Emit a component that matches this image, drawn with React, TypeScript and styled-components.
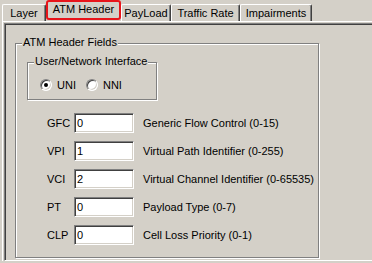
import React from "react";
import styled, { createGlobalStyle } from "styled-components";

const GlobalStyle = createGlobalStyle`
  html, body {
    margin: 0;
    padding: 0;
    background: #d4d0c8;
    overflow: hidden;
  }
  body {
    font-family: "Liberation Sans", Arial, sans-serif;
    font-size: 11px;
    color: #000;
  }
`;

const Window = styled.div`
  width: 372px;
  height: 263px;
  overflow: hidden;
  background: #d4d0c8;
`;

const TabStrip = styled.div`
  display: flex;
  align-items: flex-end;
  height: 21px;
  padding-left: 2px;
  box-sizing: border-box;
`;

const Tab = styled.div<{ $w: number }>`
  display: flex;
  justify-content: center;
  box-sizing: border-box;
  width: ${(p) => p.$w}px;
  height: 17px;
  padding-top: 2px;
  line-height: 13px;
  border-top: 1px solid #fff;
  border-left: 1px solid #fff;
  border-right: 1px solid #404040;
  box-shadow: inset -1px 0 0 #808080;
  border-radius: 2px 2px 0 0;
  white-space: nowrap;
`;

const ActiveTab = styled.div<{ $w: number }>`
  display: flex;
  justify-content: center;
  box-sizing: border-box;
  width: ${(p) => p.$w}px;
  height: 20px;
  margin-bottom: 1px;
  padding-top: 1px;
  line-height: 13px;
  border: 2px solid #e8141a;
  border-radius: 3px;
  white-space: nowrap;
`;

const Panel = styled.div`
  margin-left: 2px;
  border-top: 1px solid #fff;
  border-left: 1px solid #fff;
  padding: 1px 0 0 1px;
`;

const Sunken = styled.div`
  box-sizing: border-box;
  width: 420px;
  height: 238px;
  border-top: 1px solid #808080;
  border-left: 1px solid #808080;
  border-bottom: 1px solid #fff;
  box-shadow: inset 1px 1px 0 #404040;
  padding: 19px 0 0 10px;
`;

const Group = styled.div<{ $w: number; $h: number; $pt: number; $pl: number }>`
  position: relative;
  box-sizing: border-box;
  width: ${(p) => p.$w}px;
  height: ${(p) => p.$h}px;
  border: 1px solid #808080;
  box-shadow: inset 1px 1px 0 #fff, 1px 1px 0 #fff;
  padding: ${(p) => p.$pt}px 0 0 ${(p) => p.$pl}px;
`;

const GroupTitle = styled.span`
  position: absolute;
  top: -8px;
  left: 6px;
  padding: 0 1px;
  line-height: 13px;
  background: #d4d0c8;
  white-space: nowrap;
`;

const RadioRow = styled.div`
  display: flex;
  align-items: center;
  height: 16px;
  margin-top: 14px;
  gap: 10px;
`;

const RadioOption = styled.label`
  display: flex;
  align-items: center;
  gap: 5px;
  line-height: 13px;
`;

const RadioCircle = styled.span`
  display: flex;
  align-items: center;
  justify-content: center;
  box-sizing: border-box;
  width: 12px;
  height: 12px;
  border-radius: 50%;
  border: 1px solid;
  border-color: #808080 #fff #fff #808080;
  box-shadow: inset 1px 1px 0 #404040, inset -1px -1px 0 #d4d0c8;
  background: #fff;
`;

const RadioDot = styled.span`
  width: 4px;
  height: 4px;
  border-radius: 50%;
  background: #000;
`;

const Rows = styled.div`
  display: flex;
  flex-direction: column;
  gap: 8px;
  margin-top: 13px;
  margin-left: 20px;
`;

const Row = styled.div`
  display: flex;
  align-items: center;
  height: 20px;
`;

const FieldLabel = styled.span`
  width: 27px;
  line-height: 13px;
`;

const Edit = styled.input`
  box-sizing: border-box;
  width: 60px;
  height: 20px;
  margin: 0;
  padding: 0 2px;
  border: 1px solid;
  border-color: #808080 #fff #fff #808080;
  box-shadow: inset 1px 1px 0 #404040, inset -1px -1px 0 #d4d0c8;
  background: #fff;
  font: inherit;
  color: #000;
  outline: none;
`;

const Description = styled.span`
  margin-left: 9px;
  line-height: 13px;
  white-space: nowrap;
`;

const tabs = [
  { label: "Layer", w: 44 },
  { label: "ATM Header", w: 75, active: true },
  { label: "PayLoad", w: 50 },
  { label: "Traffic Rate", w: 69 },
  { label: "Impairments", w: 72 },
];

const fields = [
  { name: "GFC", value: "0", desc: "Generic Flow Control (0-15)" },
  { name: "VPI", value: "1", desc: "Virtual Path Identifier (0-255)" },
  { name: "VCI", value: "2", desc: "Virtual Channel Identifier (0-65535)" },
  { name: "PT", value: "0", desc: "Payload Type (0-7)" },
  { name: "CLP", value: "0", desc: "Cell Loss Priority (0-1)" },
];

const App = () => {
  return (
    <Window>
      <GlobalStyle />
      <TabStrip>
        {tabs.map((t) =>
          t.active ? (
            <ActiveTab key={t.label} $w={t.w}>
              {t.label}
            </ActiveTab>
          ) : (
            <Tab key={t.label} $w={t.w}>
              {t.label}
            </Tab>
          )
        )}
      </TabStrip>
      <Panel>
        <Sunken>
          <Group $w={304} $h={215} $pt={18} $pl={11}>
            <GroupTitle>ATM Header Fields</GroupTitle>
            <Group $w={130} $h={38} $pt={0} $pl={12}>
              <GroupTitle>User/Network Interface</GroupTitle>
              <RadioRow>
                <RadioOption>
                  <RadioCircle>
                    <RadioDot />
                  </RadioCircle>
                  UNI
                </RadioOption>
                <RadioOption>
                  <RadioCircle />
                  NNI
                </RadioOption>
              </RadioRow>
            </Group>
            <Rows>
              {fields.map((f) => (
                <Row key={f.name}>
                  <FieldLabel>{f.name}</FieldLabel>
                  <Edit defaultValue={f.value} readOnly />
                  <Description>{f.desc}</Description>
                </Row>
              ))}
            </Rows>
          </Group>
        </Sunken>
      </Panel>
    </Window>
  );
};

export default App;
